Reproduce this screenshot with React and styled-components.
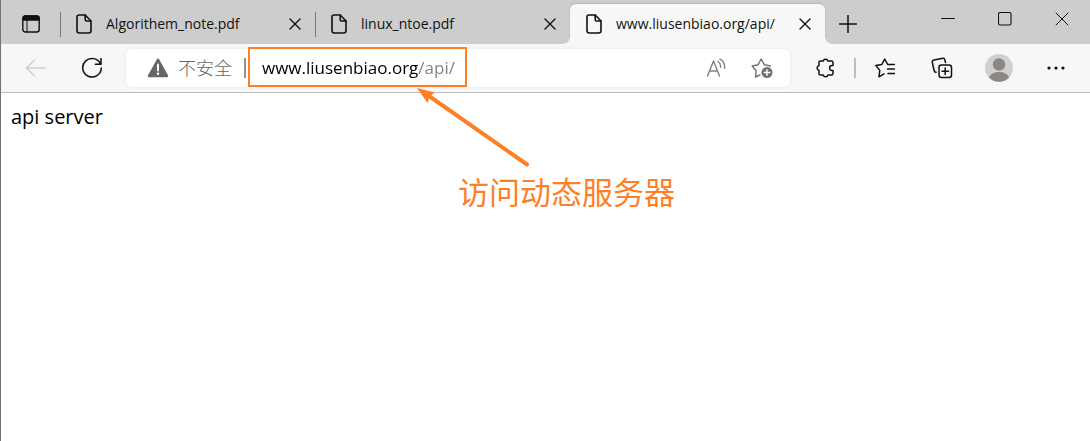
import React from "react";
import styled, { createGlobalStyle, css } from "styled-components";

const GlobalStyle = createGlobalStyle`
  * { box-sizing: border-box; }
  body {
    margin: 0;
    background: #fff;
    font-family: "Open Sans", "Noto Sans CJK SC", sans-serif;
  }
  button, input { font: inherit; color: inherit; }
`;

const ACCENT = "#ff7f27";

const Window = styled.div`
  min-height: 100vh;
  border-left: 1px solid #737373;
  background: #fff;
`;

const TabStrip = styled.header`
  display: flex;
  height: 44px;
  background: #cdcdcd;
`;

const IconButton = styled.button`
  display: flex;
  align-items: center;
  justify-content: center;
  flex: none;
  width: ${(p) => p.$width || 56}px;
  height: ${(p) => p.$height || 40}px;
  padding: 0;
  border: 0;
  background: none;
  color: ${(p) => p.$color || "#111"};
`;

const Tabs = styled.nav`
  display: flex;
  flex: 0 1 765px;
  min-width: 0;
  padding-top: 4px;
`;

const footCurve = css`
  content: "";
  position: absolute;
  bottom: 0;
  width: 6px;
  height: 6px;
`;

const Tab = styled.div`
  position: relative;
  display: flex;
  align-items: center;
  flex: 1 1 255px;
  min-width: 0;
  height: 40px;
  padding: 0 8px 0 16px;
  color: #111;

  ${(p) =>
    p.$active
      ? css`
          background: #f7f7f7;
          border-radius: 6px 6px 0 0;
          box-shadow: 0 -1px 2px rgba(0, 0, 0, 0.12);
          &::before {
            ${footCurve}
            left: -6px;
            background: radial-gradient(circle at 0 0, #cdcdcd 5px, #f7f7f7 6px);
          }
          &::after {
            ${footCurve}
            right: -6px;
            background: radial-gradient(circle at 100% 0, #cdcdcd 5px, #f7f7f7 6px);
          }
        `
      : css`
          &::before {
            content: "";
            position: absolute;
            left: 0;
            top: 8px;
            width: 1px;
            height: 25px;
            background: #777;
          }
        `}
`;

const TabLabel = styled.button`
  display: flex;
  align-items: center;
  gap: 14px;
  flex: 1;
  min-width: 0;
  padding: 0;
  border: 0;
  background: none;
  font-size: 14px;
  line-height: 20px;
  text-align: left;
  white-space: nowrap;
  overflow: hidden;
`;

const WindowControls = styled.div`
  display: flex;
  margin-left: auto;
`;

const Toolbar = styled.div`
  display: flex;
  align-items: center;
  height: 49px;
  padding: 0 6px 0 7px;
  background: #f7f7f7;
  border-bottom: 1px solid #bdbdbd;
`;

const AddressBar = styled.div`
  display: flex;
  align-items: center;
  flex: 1;
  min-width: 0;
  height: 38px;
  margin: 0 7px 0 6px;
  padding: 0 5px 0 21px;
  border-radius: 6px;
  background: #fff;
  box-shadow: 0 0 4px rgba(0, 0, 0, 0.05);
`;

const Security = styled.button`
  display: flex;
  align-items: center;
  gap: 9px;
  flex: none;
  padding: 0;
  margin-right: 12px;
  border: 0;
  background: none;
  color: #666;
  font-size: 18px;
  font-weight: 300;
  line-height: 24px;
`;

const Divider = styled.span`
  flex: none;
  width: 2px;
  height: 20px;
  background: ${(p) => p.$color};
`;

const UrlField = styled.div`
  position: relative;
  display: flex;
  flex: 1;
  min-width: 0;
  margin-left: 16px;
`;

const UrlInput = styled.input`
  width: 100%;
  height: 28px;
  padding: 0;
  border: 0;
  outline: 0;
  font-size: 17px;
  line-height: 28px;
  color: #111;
  -webkit-text-fill-color: transparent;
  background: linear-gradient(90deg, #000 156px, #808080 156px);
  background-clip: text;
  -webkit-background-clip: text;
`;

const ToolGroup = styled.div`
  display: flex;
  align-items: center;
  gap: 1px;
`;

const Highlight = styled.span`
  position: absolute;
  left: -14px;
  top: -7px;
  width: 219px;
  height: 40px;
  border: 2px solid ${ACCENT};
  pointer-events: none;
`;

const Note = styled.div`
  position: absolute;
  left: 154px;
  top: 33px;
  color: ${ACCENT};
  pointer-events: none;
`;

const NoteText = styled.p`
  margin: 4px 0 0 42px;
  font-family: "Noto Sans CJK SC", sans-serif;
  font-size: 31px;
  line-height: 40px;
  white-space: nowrap;
`;

const Arrow = styled.svg`
  display: block;
`;

const Page = styled.main`
  padding: 9px 10px;
  font-size: 20px;
  line-height: 30px;
  color: #000;
`;

const PageText = styled.p`
  margin: 0;
`;

const IconSvg = styled.svg`
  flex: none;
  fill: none;
  stroke: currentColor;
  stroke-linecap: round;
  stroke-linejoin: round;
`;

function Icon({ w = 20, h = w, sw = 1.4, children }) {
  return (
    <IconSvg width={w} height={h} viewBox={`0 0 ${w} ${h}`} strokeWidth={sw} aria-hidden="true">
      {children}
    </IconSvg>
  );
}

const FileIcon = () => (
  <Icon w={16} h={20} sw={1.6}>
    <path d="M3 1h6.2L15 7v9.8a2.2 2.2 0 0 1-2.2 2.2H3.2A2.2 2.2 0 0 1 1 16.800V3a2 2 0 0 1 2-2Z" />
    <path d="M9.200 1v4.600A1.400 1.400 0 0 0 10.600 7H15" />
  </Icon>
);

const CloseIcon = ({ size = 12, sw = 1.4 }) => (
  <Icon w={size} sw={sw}>
    <path d={`M1 1 ${size - 1} ${size - 1}M${size - 1} 1 1 ${size - 1}`} />
  </Icon>
);

const TABS = [
  { title: "Algorithem_note.pdf" },
  { title: "linux_ntoe.pdf" },
  { title: "www.liusenbiao.org/api/", active: true },
];

export default function App() {
  return (
    <>
      <GlobalStyle />
      <Window>
        <TabStrip>
          <IconButton $width={59} $height={48} aria-label="Tab actions">
            <Icon w={18}>
              <rect x="0.800" y="1" width="16.400" height="16" rx="2.500" />
              <path d="M1 5V3.200A2.200 2.200 0 0 1 3.200 1h11.600A2.200 2.200 0 0 1 17 3.200V5Z" fill="currentColor" />
              <path d="M5 5v12" strokeWidth="1" />
            </Icon>
          </IconButton>
          <Tabs>
            {TABS.map((tab) => (
              <Tab key={tab.title} $active={tab.active}>
                <TabLabel>
                  <FileIcon />
                  {tab.title}
                </TabLabel>
                <IconButton $width={24} $height={24} aria-label={`Close ${tab.title}`}>
                  <CloseIcon />
                </IconButton>
              </Tab>
            ))}
          </Tabs>
          <IconButton $width={46} $height={48} aria-label="New tab">
            <Icon w={18} sw={1.5}>
              <path d="M9 .5v17M.5 9h17" />
            </Icon>
          </IconButton>
          <WindowControls>
            <IconButton $width={57} $height={38} aria-label="Minimize">
              <Icon w={14} sw={1}>
                <path d="M.5 6.500h13" />
              </Icon>
            </IconButton>
            <IconButton $width={57} $height={38} aria-label="Maximize">
              <Icon w={14} sw={1.1}>
                <rect x=".5" y=".5" width="12.500" height="12.500" rx="1.500" />
              </Icon>
            </IconButton>
            <IconButton $width={57} $height={38} aria-label="Close window">
              <CloseIcon size={14} sw={1} />
            </IconButton>
          </WindowControls>
        </TabStrip>

        <Toolbar>
          <IconButton aria-label="Back" $color="#cecece">
            <Icon w={22} h={20}>
              <path d="M20.500 10H1.500M9.500 2 1.500 10l8 8" />
            </Icon>
          </IconButton>
          <IconButton aria-label="Refresh">
            <Icon w={22} h={22} sw={1.5}>
              <path d="M19.600 7.200A9.300 9.300 0 1 0 20.300 11M20 1.500v5.700h-5.700" />
            </Icon>
          </IconButton>

          <AddressBar>
            <Security>
              <Icon w={22} h={20}>
                <path d="M11 1.800 20 18H2Z" fill="currentColor" strokeWidth="2.500" />
                <path d="M11 6.500v6" stroke="#fff" strokeWidth="2" />
                <circle cx="11" cy="15.800" r="1.200" fill="#fff" stroke="none" />
              </Icon>
              不安全
            </Security>
            <Divider $color="#949494" />
            <UrlField>
              <UrlInput aria-label="Address" defaultValue="www.liusenbiao.org/api/" />
              <Highlight />
              <Note>
                <Arrow width="114" height="80" viewBox="0 0 114 80" aria-hidden="true">
                  <path d="M111 77.500 13 9" stroke={ACCENT} strokeWidth="4" strokeLinecap="round" />
                  <path d="M1 1 19 5.500 13.500 9.500 11.500 16Z" fill={ACCENT} />
                </Arrow>
                <NoteText>访问动态服务器</NoteText>
              </Note>
            </UrlField>
            <IconButton $width={46} $height={32} $color="#808080" aria-label="Read aloud">
              <Icon w={20}>
                <path d="M1.500 18 7.500 3l6 15M3.600 13h7.800" />
                <path d="M12 3.500a6 6 0 0 1 2.500 5.800M14 1.200a9 9 0 0 1 4.500 9" />
              </Icon>
            </IconButton>
            <IconButton $width={46} $height={32} $color="#737373" aria-label="Add to favorites">
              <Icon w={22}>
                <path d="M9 18l-4.500 2 .6-6.200L1.200 9l5.800-1.200L10.200 2l3.200 5.800 6 1.200" />
                <circle cx="16" cy="15.500" r="5.500" fill="currentColor" stroke="none" />
                <path d="M16 12.800v5.400M13.300 15.500h5.400" stroke="#fff" />
              </Icon>
            </IconButton>
          </AddressBar>

          <ToolGroup>
            <IconButton aria-label="Extensions">
              <Icon w={20} sw={1.5}>
                <path d="M5.500 3H8.200A2.500 2.500 0 0 1 13 3H16.500Q18 3 18 4.500V7.600H17A2.400 2.400 0 0 0 17 12.400H18V15.500Q18 17 16.500 17H13A2.500 2.500 0 0 1 8.200 17H5.500Q4 17 4 15.500V12.500A2.600 2.600 0 0 1 4 7.500V4.500Q4 3 5.500 3Z" />
              </Icon>
            </IconButton>
            <Divider $color="#bdbdbd" />
            <IconButton aria-label="Favorites">
              <Icon w={20} sw={1.5}>
                <path d="M9 15.800 4 18.800l.8-6.400L.8 7.500l6-1L9.700 1l3 5.500h6.800M12.500 11h7M13 15.500h6.500" />
              </Icon>
            </IconButton>
            <IconButton aria-label="Collections">
              <Icon w={22} sw={1.5}>
                <rect x="8" y="8" width="12.500" height="12.500" rx="2.500" />
                <path d="M14.200 11v6.500M11 14.200h6.500M14.500 5.500l-.7-2.800Q13.500 1 11.700 1.300L3 3Q1 3.500 1.300 5.500l1.800 8Q3.500 15.500 5.200 15.200" />
              </Icon>
            </IconButton>
            <IconButton aria-label="Profile">
              <svg width="28" height="28" viewBox="0 0 28 28" aria-hidden="true">
                <circle cx="14" cy="14" r="14" fill="#d2d0ce" />
                <circle cx="14" cy="10.500" r="6.200" fill="#8d8784" />
                <path d="M4 23.500C6 16 22 16 24 23.500a14 14 0 0 1-20 0Z" fill="#8d8784" />
              </svg>
            </IconButton>
            <IconButton aria-label="Settings and more">
              <Icon w={18} h={4}>
                <g fill="currentColor" stroke="none">
                  <circle cx="2" cy="2" r="1.600" />
                  <circle cx="9" cy="2" r="1.600" />
                  <circle cx="16" cy="2" r="1.600" />
                </g>
              </Icon>
            </IconButton>
          </ToolGroup>
        </Toolbar>

        <Page>
          <PageText>api server</PageText>
        </Page>
      </Window>
    </>
  );
}
